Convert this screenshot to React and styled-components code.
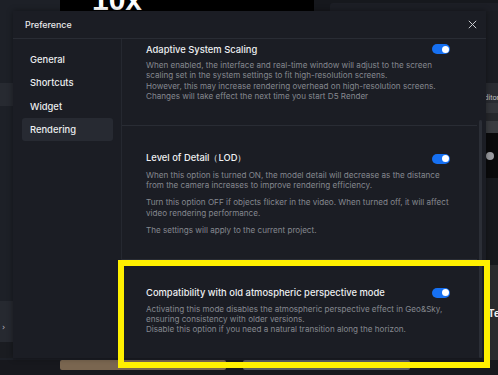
import React from "react";
import styled, { createGlobalStyle } from "styled-components";

const Global = createGlobalStyle`
  html, body { margin: 0; padding: 0; background: #16181d; }
  body { font-family: Inter, "Noto Sans", sans-serif; -webkit-font-smoothing: antialiased; }
  * { box-sizing: border-box; }
`;

const Stage = styled.div`
  position: relative;
  width: 498px;
  height: 375px;
  overflow: hidden;
  background: #16181d;
`;

/* ---------- app backdrop ---------- */
const Backdrop = styled.div`
  display: flex;
  flex-direction: column;
  width: 100%;
  height: 100%;
`;

const TopStrip = styled.div`
  display: flex;
  height: 11px;
  flex: none;
`;

const Block = styled.div`
  flex: ${(p) => (p.$w ? "none" : "1")};
  width: ${(p) => (p.$w ? `${p.$w}px` : "auto")};
  background: ${(p) => p.$bg || "transparent"};
`;

const Viewport = styled.div`
  width: 254px;
  flex: none;
  background: #000;
  overflow: hidden;
  display: flex;
  align-items: flex-end;
  padding-left: 32px;
`;

const BigText = styled.span`
  font-family: "Liberation Sans", Arial, sans-serif;
  font-weight: 700;
  font-size: 30px;
  line-height: 23px;
  color: #fff;
`;

const TopPanel = styled.div`
  flex: 1;
  background: #16181d;
  padding-top: 3px;
  display: flex;
`;

const TopPanelInner = styled.div`
  flex: 1;
  background: #1c1e25;
  border-top-left-radius: 3px;
`;

const Middle = styled.div`
  flex: 1;
  display: flex;
`;

const Rail = styled.div`
  width: ${(p) => p.$w}px;
  flex: none;
  display: flex;
  flex-direction: column;
  background: ${(p) => p.$bg};
  overflow: hidden;
`;

const RailPiece = styled.div`
  height: ${(p) => p.$h}px;
  flex: none;
  background: ${(p) => p.$bg};
  display: flex;
  align-items: center;
  overflow: hidden;
`;

const Chevron = styled.span`
  font-family: "DejaVu Sans", sans-serif;
  font-size: 8px;
  color: #b9bbc0;
  padding-left: 2px;
  margin-top: 11px;
`;

const TinyLabel = styled.span`
  font-size: 7px;
  color: #c3c5c9;
  white-space: nowrap;
  margin-left: -6px;
  margin-top: 9px;
`;

const GreyDot = styled.span`
  width: 8px;
  height: 8px;
  border-radius: 50%;
  background: #9a9ba0;
  flex: none;
`;

const PhotoText = styled.span`
  font-size: 10px;
  font-weight: 700;
  color: #f2f2f2;
  margin-left: 2px;
`;

const BottomStrip = styled.div`
  height: 17px;
  flex: none;
  display: flex;
  background: #17181d;
`;

const Thumb = styled.div`
  width: ${(p) => p.$w}px;
  height: 10px;
  flex: none;
  margin-left: ${(p) => p.$ml}px;
  background: ${(p) => p.$bg};
  border-radius: 2px;
`;

/* ---------- dialog ---------- */
const Dialog = styled.div`
  position: absolute;
  left: 13px;
  top: 11px;
  width: 473px;
  height: 347px;
  background: #1b1d24;
  display: flex;
  flex-direction: column;
  box-shadow: 0 0 6px rgba(0, 0, 0, 0.4);
`;

const Header = styled.div`
  height: 28px;
  flex: none;
  display: flex;
  align-items: center;
  justify-content: space-between;
  padding: 0 9px 0 12px;
  border-bottom: 1px solid #292c34;
`;

const HeaderTitle = styled.span`
  font-size: 8.9px;
  font-weight: 500;
  color: #e9eaec;
  margin-top: -1px;
`;

const CloseBtn = styled.button`
  width: 10px;
  height: 10px;
  padding: 0;
  border: 0;
  background: none;
  display: flex;
  align-items: center;
  justify-content: center;
  margin-top: -1px;
`;

const Body = styled.div`
  flex: 1;
  display: flex;
  min-height: 0;
`;

const Sidebar = styled.nav`
  width: 109px;
  flex: none;
  border-right: 1px solid #252830;
  padding: 8.3px 8px 0 9px;
  display: flex;
  flex-direction: column;
`;

const NavItem = styled.div`
  height: 23.5px;
  display: flex;
  align-items: center;
  padding-left: 8px;
  border-radius: 3px;
  font-size: 9.4px;
  font-weight: 500;
  color: #eceef0;
  background: ${(p) => (p.$active ? "#272a32" : "transparent")};
`;

const Content = styled.div`
  flex: 1;
  display: flex;
  flex-direction: column;
  overflow: hidden;
`;

const Section = styled.section`
  flex: none;
  padding: ${(p) => p.$pt}px 27px 23.5px 24px;
  border-bottom: ${(p) => (p.$last ? "none" : "1px solid #292c34")};
`;

const TitleRow = styled.div`
  display: flex;
  align-items: center;
  justify-content: space-between;
  height: 14px;
`;

const Title = styled.h3`
  margin: 0;
  font-size: 9.4px;
  font-weight: 500;
  color: #eef0f2;
`;

const Desc = styled.div`
  margin-top: 4px;
  display: flex;
  flex-direction: column;
  gap: 7px;
`;

const Para = styled.p`
  margin: 0;
  font-size: 8.1px;
  line-height: 10.3px;
  color: #85888f;
  white-space: pre;
`;

const Toggle = styled.span`
  width: 18px;
  height: 10px;
  border-radius: 5px;
  background: #1670f2;
  display: flex;
  align-items: center;
  justify-content: flex-end;
  padding-right: 1.5px;
  flex: none;
`;

const Knob = styled.span`
  width: 7px;
  height: 7px;
  border-radius: 50%;
  background: #fff;
`;

const ScrollTrack = styled.div`
  width: 9px;
  flex: none;
  padding: 81px 4px 0 2px;
  display: flex;
`;

const ScrollThumb = styled.div`
  flex: 1;
  background: #2b2e36;
  border-radius: 1.5px;
`;

const Highlight = styled.div`
  position: absolute;
  left: 118px;
  top: 260px;
  width: 372px;
  height: 108px;
  border: 6px solid #fff000;
  pointer-events: none;
`;

const sections = [
  {
    title: "Adaptive System Scaling",
    pt: 3,
    paras: [
      "When enabled, the interface and real-time window will adjust to the screen\nscaling set in the system settings to fit high-resolution screens.\nHowever, this may increase rendering overhead on high-resolution screens.\nChanges will take effect the next time you start D5 Render",
    ],
  },
  {
    title: "Level of Detail（LOD）",
    pt: 26,
    paras: [
      "When this option is turned ON, the model detail will decrease as the distance\nfrom the camera increases to improve rendering efficiency.",
      "Turn this option OFF if objects flicker in the video. When turned off, it will affect\nvideo rendering performance.",
      "The settings will apply to the current project.",
    ],
  },
  {
    title: "Compatibility with old atmospheric perspective mode",
    pt: 26,
    last: true,
    paras: [
      "Activating this mode disables the atmospheric perspective effect in Geo&Sky,\nensuring consistency with older versions.\nDisable this option if you need a natural transition along the horizon.",
    ],
  },
];

const navItems = ["General", "Shortcuts", "Widget", "Rendering"];

export default function App() {
  return (
    <Stage>
      <Global />
      <Backdrop>
        <TopStrip>
          <Block $w={60} $bg="#1d2027" />
          <Viewport>
            <BigText>10x</BigText>
          </Viewport>
          <Block $w={16} $bg="#16181d" />
          <TopPanel>
            <TopPanelInner />
          </TopPanel>
        </TopStrip>
        <Middle>
          <Rail $w={13} $bg="#1d2027">
            <RailPiece $h={72} $bg="#1d2027" />
            <RailPiece $h={23} $bg="#272a31" />
            <RailPiece $h={195} $bg="#1d2027" />
            <RailPiece $h={41} $bg="#262930">
              <Chevron>›</Chevron>
            </RailPiece>
            <RailPiece $h={16} $bg="#1a1c21" />
          </Rail>
          <Block $bg="#1b1d24" />
          <Rail $w={12} $bg="#17191e">
            <RailPiece $h={72} $bg="#1b1d23" />
            <RailPiece $h={20} $bg="#2a2c32">
              <TinyLabel>Editor</TinyLabel>
            </RailPiece>
            <RailPiece $h={10} $bg="#34363b" />
            <RailPiece $h={8} $bg="#26282c" />
            <RailPiece $h={12} $bg="#3a3c40" />
            <RailPiece $h={45} $bg="#0a0a0b">
              <GreyDot />
            </RailPiece>
            <RailPiece $h={87} $bg="#17191d" />
            <RailPiece $h={95} $bg="#2a2b2e">
              <PhotoText>Te</PhotoText>
            </RailPiece>
          </Rail>
        </Middle>
        <BottomStrip>
          <Thumb $w={166} $ml={60} $bg="#7a6650" />
          <Thumb $w={167} $ml={17} $bg="#5a5c61" />
        </BottomStrip>
      </Backdrop>

      <Dialog>
        <Header>
          <HeaderTitle>Preference</HeaderTitle>
          <CloseBtn aria-label="Close">
            <svg width="9" height="9" viewBox="0 0 9 9">
              <path d="M0.8 0.8 L8.2 8.2 M8.2 0.8 L0.8 8.2" stroke="#c9cbcf" strokeWidth="1" />
            </svg>
          </CloseBtn>
        </Header>
        <Body>
          <Sidebar>
            {navItems.map((n) => (
              <NavItem key={n} $active={n === "Rendering"}>
                {n}
              </NavItem>
            ))}
          </Sidebar>
          <Content>
            {sections.map((s) => (
              <Section key={s.title} $pt={s.pt} $last={s.last}>
                <TitleRow>
                  <Title>{s.title}</Title>
                  <Toggle>
                    <Knob />
                  </Toggle>
                </TitleRow>
                <Desc>
                  {s.paras.map((p, i) => (
                    <Para key={i}>{p}</Para>
                  ))}
                </Desc>
              </Section>
            ))}
          </Content>
          <ScrollTrack>
            <ScrollThumb />
          </ScrollTrack>
        </Body>
      </Dialog>
      <Highlight />
    </Stage>
  );
}
